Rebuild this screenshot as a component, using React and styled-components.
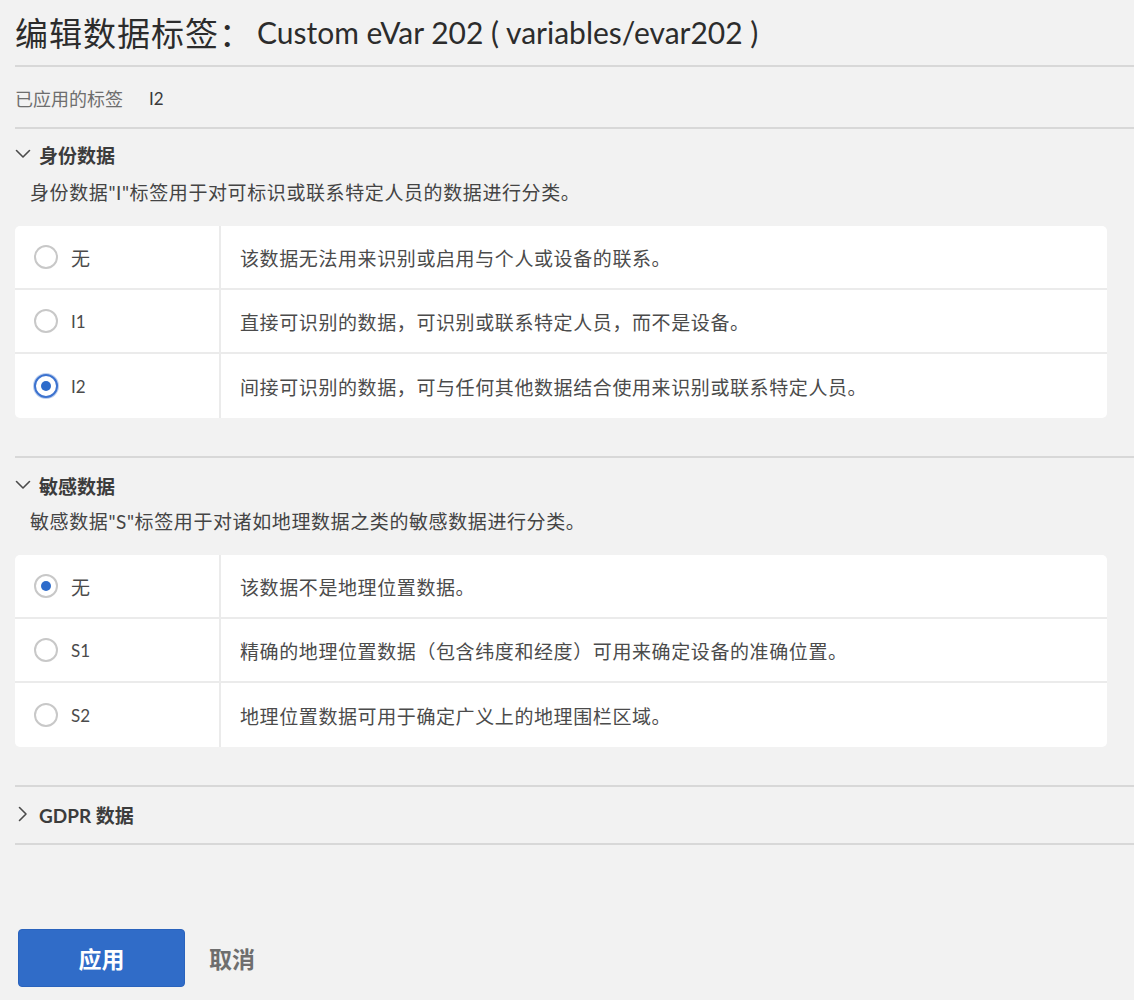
import React, { useState } from 'react';
import styled, { createGlobalStyle } from 'styled-components';

const GlobalStyle = createGlobalStyle`
  html, body {
    margin: 0;
    padding: 0;
    background: #f2f2f2;
  }
  body {
    font-family: Lato, "Noto Sans CJK SC", sans-serif;
    color: #323232;
  }
`;

const Page = styled.div`
  width: 1134px;
  min-height: 1000px;
  padding-left: 15px;
  box-sizing: border-box;
  background: #f2f2f2;
`;

const Title = styled.h1`
  margin: 0;
  height: 67px;
  display: flex;
  align-items: center;
  gap: 4px;
  font-weight: 400;
  color: #2c2c2c;
  border-bottom: 2px solid #d8d8d8;
  box-sizing: border-box;
  padding-bottom: 2px;
`;

const TitleLabel = styled.span`
  font-size: 33px;
  letter-spacing: 1px;
`;

const TitleName = styled.span`
  font-size: 30px;
`;

const AppliedRow = styled.div`
  height: 62px;
  display: flex;
  align-items: center;
  gap: 26px;
  font-size: 18px;
  color: #6e6e6e;
  border-bottom: 2px solid #d8d8d8;
  box-sizing: border-box;
  padding-top: 2px;

  b {
    font-weight: 400;
    font-size: 17px;
    color: #3a3a3a;
  }
`;

const Section = styled.section`
  border-bottom: 2px solid #d8d8d8;
  padding-bottom: ${(p) => (p.$open ? '38px' : '11px')};
`;

const SectionHeader = styled.div`
  height: 40px;
  margin-top: ${(p) => (p.$first ? '5px' : '7px')};
  margin-bottom: ${(p) => (p.$first ? '0' : '-2px')};
  display: flex;
  align-items: center;
  gap: 8px;
  font-size: 19px;
  font-weight: 700;
  color: #3c3c3c;
`;

const Chevron = styled.svg`
  width: 16px;
  height: 16px;
  flex: none;
`;

const Description = styled.p`
  margin: 9px 0 23px 15px;
  font-size: 19px;
  letter-spacing: 0.6px;
  color: #444;
  line-height: 20px;
`;

const Card = styled.div`
  margin-right: 27px;
  background: #fff;
  border-radius: 5px;
  overflow: hidden;
`;

const Row = styled.label`
  display: grid;
  grid-template-columns: 206px 1fr;
  height: 64px;
  box-sizing: border-box;
  border-bottom: ${(p) => (p.$last ? 'none' : '2px solid #ebebeb')};
  cursor: pointer;
`;

const LabelCell = styled.div`
  display: flex;
  align-items: center;
  gap: 13px;
  padding-left: 19px;
  border-right: 2px solid #ebebeb;
  font-size: 19px;
  color: #4b4b4b;
`;

const LatinLabel = styled.span`
  font-size: 17px;
`;

const DescCell = styled.div`
  display: flex;
  align-items: center;
  padding-left: 19px;
  font-size: 19px;
  letter-spacing: 0.6px;
  color: #4b4b4b;
`;

const Radio = styled.span`
  width: 24px;
  height: 24px;
  border-radius: 50%;
  box-sizing: border-box;
  border: 2px solid ${(p) => (p.$focus ? '#3d73cf' : '#c8c8c8')};
  box-shadow: ${(p) => (p.$focus ? '0 0 0 1px rgba(61,115,207,0.35)' : 'none')};
  background: #fff;
  display: flex;
  align-items: center;
  justify-content: center;
  flex: none;

  &::after {
    content: '';
    width: 10px;
    height: 10px;
    border-radius: 50%;
    background: ${(p) => (p.$checked ? '#2e6ccb' : 'transparent')};
  }
`;

const Footer = styled.div`
  display: flex;
  align-items: center;
  gap: 24px;
  padding: 84px 0 0 3px;
`;

const PrimaryButton = styled.button`
  width: 167px;
  height: 58px;
  border: 1px solid #2a63bd;
  border-radius: 4px;
  background: #306cc8;
  color: #fff;
  font-family: Lato, "Noto Sans CJK SC", sans-serif;
  font-size: 23px;
  font-weight: 700;
  cursor: pointer;
`;

const QuietButton = styled.button`
  border: none;
  background: transparent;
  color: #6e6e6e;
  font-family: Lato, "Noto Sans CJK SC", sans-serif;
  font-size: 23px;
  font-weight: 700;
  padding: 0;
  cursor: pointer;
`;

const ChevronIcon = ({ open }) => (
  <Chevron viewBox="0 0 16 16">
    <path
      d={open ? 'M1.5 4.5 L8 11 L14.5 4.5' : 'M4.5 1.5 L11 8 L4.5 14.5'}
      fill="none"
      stroke="#4b4b4b"
      strokeWidth="1.6"
      strokeLinecap="round"
      strokeLinejoin="round"
    />
  </Chevron>
);

const identityOptions = [
  { id: 'none', label: '无', desc: '该数据无法用来识别或启用与个人或设备的联系。' },
  { id: 'I1', label: 'I1', desc: '直接可识别的数据，可识别或联系特定人员，而不是设备。' },
  { id: 'I2', label: 'I2', desc: '间接可识别的数据，可与任何其他数据结合使用来识别或联系特定人员。' },
];

const sensitiveOptions = [
  { id: 'none', label: '无', desc: '该数据不是地理位置数据。' },
  { id: 'S1', label: 'S1', desc: '精确的地理位置数据（包含纬度和经度）可用来确定设备的准确位置。' },
  { id: 'S2', label: 'S2', desc: '地理位置数据可用于确定广义上的地理围栏区域。' },
];

const OptionCard = ({ options, value, onChange, focused }) => (
  <Card>
    {options.map((opt, i) => (
      <Row key={opt.id} $last={i === options.length - 1} onClick={() => onChange(opt.id)}>
        <LabelCell>
          <Radio $checked={value === opt.id} $focus={focused && value === opt.id} />
          {opt.id === 'none' ? opt.label : <LatinLabel>{opt.label}</LatinLabel>}
        </LabelCell>
        <DescCell>{opt.desc}</DescCell>
      </Row>
    ))}
  </Card>
);

const App = () => {
  const [identity, setIdentity] = useState('I2');
  const [sensitive, setSensitive] = useState('none');

  return (
    <Page>
      <GlobalStyle />
      <Title>
        <TitleLabel>编辑数据标签：</TitleLabel>
        <TitleName>Custom eVar 202 ( variables/evar202 )</TitleName>
      </Title>

      <AppliedRow>
        <span>已应用的标签</span>
        <b>{identity !== 'none' ? identity : ''}</b>
      </AppliedRow>

      <Section $open>
        <SectionHeader $first>
          <ChevronIcon open />
          身份数据
        </SectionHeader>
        <Description>身份数据"I"标签用于对可标识或联系特定人员的数据进行分类。</Description>
        <OptionCard options={identityOptions} value={identity} onChange={setIdentity} focused />
      </Section>

      <Section $open>
        <SectionHeader>
          <ChevronIcon open />
          敏感数据
        </SectionHeader>
        <Description>敏感数据"S"标签用于对诸如地理数据之类的敏感数据进行分类。</Description>
        <OptionCard options={sensitiveOptions} value={sensitive} onChange={setSensitive} />
      </Section>

      <Section>
        <SectionHeader>
          <ChevronIcon />
          GDPR 数据
        </SectionHeader>
      </Section>

      <Footer>
        <PrimaryButton>应用</PrimaryButton>
        <QuietButton>取消</QuietButton>
      </Footer>
    </Page>
  );
};

export default App;
